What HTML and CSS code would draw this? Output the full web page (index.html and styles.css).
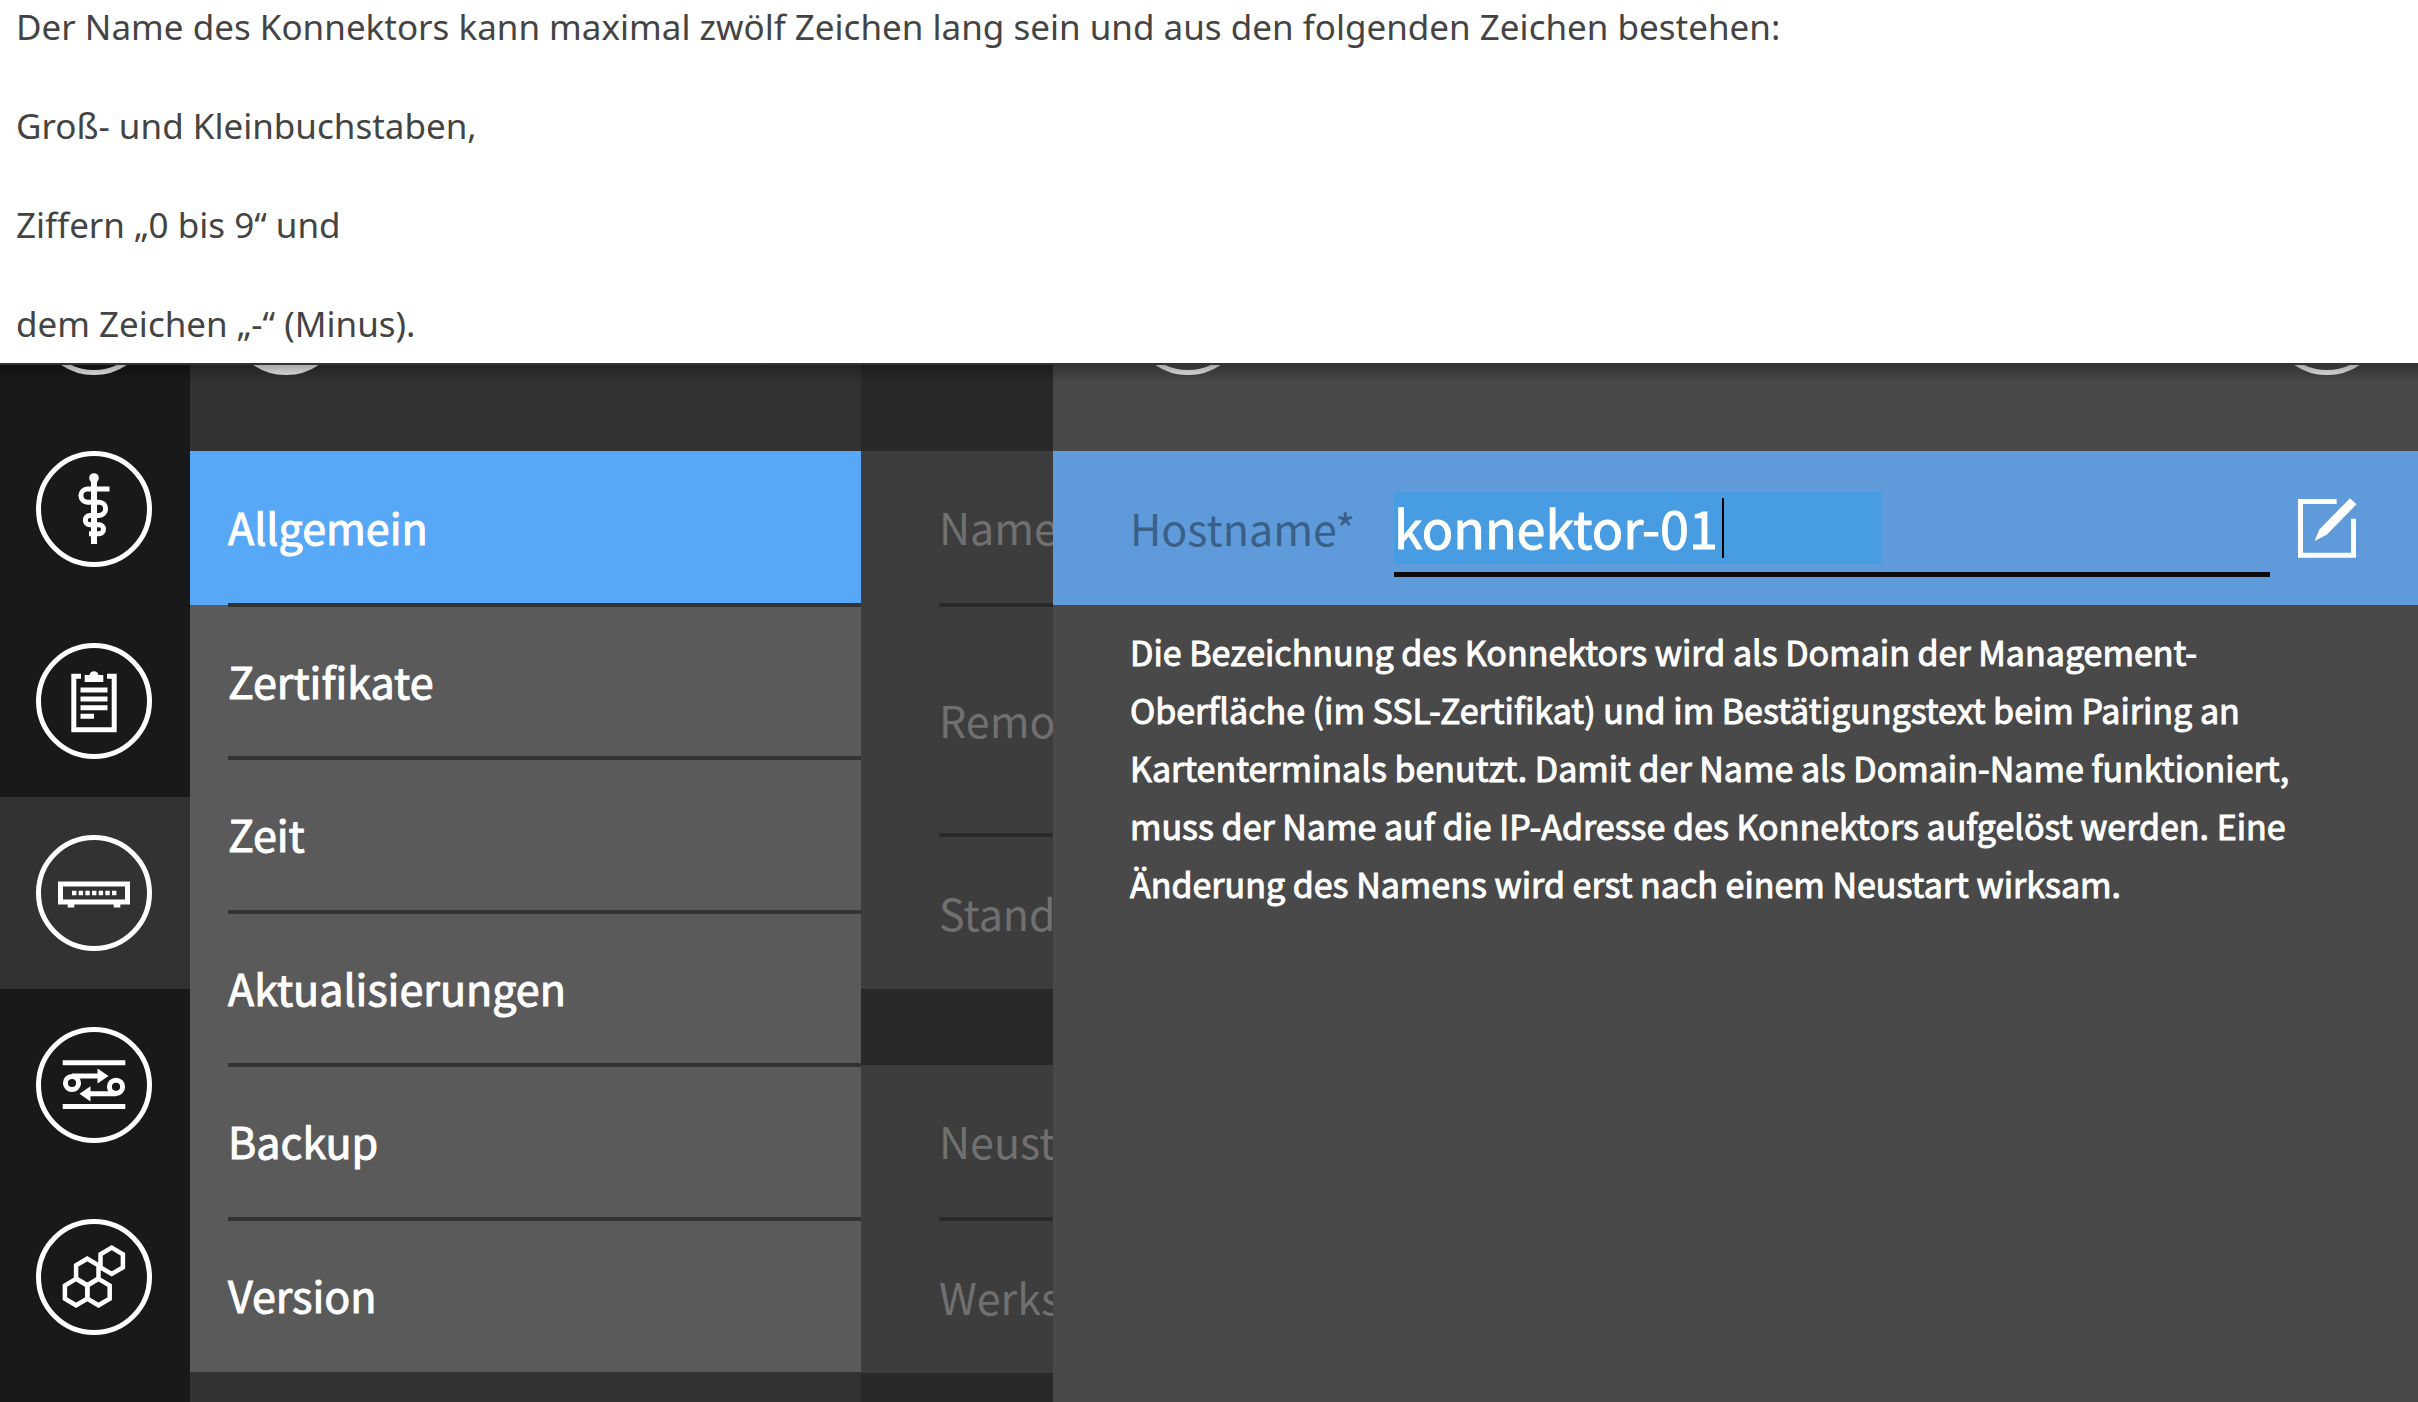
FILE: index.html
```html
<!DOCTYPE html>
<html lang="de">
<head>
<meta charset="utf-8">
<meta name="viewport" content="width=device-width, initial-scale=1">
<title>Konnektor – Allgemein</title>
<link rel="stylesheet" href="styles.css">
</head>
<body>
<section class="intro">
  <p>Der Name des Konnektors kann maximal zwölf Zeichen lang sein und aus den folgenden Zeichen bestehen:</p>
  <p>Groß- und Kleinbuchstaben,</p>
  <p>Ziffern „0 bis 9“ und</p>
  <p>dem Zeichen „-“ (Minus).</p>
</section>

<main class="app">
  <nav class="rail" aria-label="Bereiche">
    <div class="rail-item rail-item-cut"><span class="ring"></span></div>
    <button class="rail-item" type="button" aria-label="Praxis">
      <svg class="icon" viewBox="0 0 116 116" fill="none" stroke="#fff" stroke-width="5">
        <circle cx="58" cy="58" r="55.5"/>
        <circle cx="58" cy="27" r="4.8" fill="#fff" stroke="none"/>
        <path d="M58 27v66" stroke-width="6"/>
        <path d="M73.500 38H51.500a6.600 6.600 0 0 0 0 13.200H63a6.600 6.600 0 0 1 0 13.200H54a4.700 4.700 0 0 0 0 9.400h9a4.500 4.500 0 0 1 0 9H53"/>
      </svg>
    </button>
    <button class="rail-item" type="button" aria-label="Protokoll">
      <svg class="icon" viewBox="0 0 116 116" fill="none" stroke="#fff" stroke-width="5">
        <circle cx="58" cy="58" r="55.5"/>
        <path d="M45 33.200h-7.200v53.600h40.400V33.200H71"/>
        <path d="M48.700 39v-7h4.800a4.600 4.600 0 0 1 9 0h4.800v7z" fill="#fff" stroke="none"/>
        <path d="M44.500 47h27M44.500 56h27M44.500 64.700h27M44.500 73.300H58"/>
      </svg>
    </button>
    <button class="rail-item active" type="button" aria-label="System">
      <svg class="icon" viewBox="0 0 116 116" fill="none" stroke="#fff" stroke-width="5">
        <circle cx="58" cy="58" r="55.5"/>
        <path d="M24.500 49h67v18h-67z"/>
        <path d="M36 58h46" stroke-width="4.500" stroke-dasharray="4.400 2.270"/>
        <path d="M31.700 70.500h6.600M77.700 70.500h6.600" stroke-width="4"/>
      </svg>
    </button>
    <button class="rail-item" type="button" aria-label="Netzwerk">
      <svg class="icon" viewBox="0 0 116 116" fill="none" stroke="#fff" stroke-width="5">
        <circle cx="58" cy="58" r="55.5"/>
        <path d="M26.700 35.800h62.600M26.700 79.500h62.600"/>
        <circle cx="36" cy="56" r="6.600"/>
        <circle cx="80" cy="59.800" r="6.600"/>
        <path d="M36 49h29M80 66.800H52"/>
        <path d="M61.500 41.400 72.500 49l-11 7.600zM54.500 59.200 43.500 66.800l11 7.600z" fill="#fff" stroke="none"/>
      </svg>
    </button>
    <button class="rail-item" type="button" aria-label="Module">
      <svg class="icon" viewBox="0 0 116 116" fill="none" stroke="#fff" stroke-width="4.500">
        <circle cx="58" cy="58" r="55.5" stroke-width="5"/>
        <path d="M75.700 28.600l11.200 6.600v13.200l-11.200 6.600-11.200-6.600V35.200z"/>
        <path d="M51.300 39.700l11.200 6.600v13.200l-11.200 6.600-11.200-6.600V46.300z"/>
        <path d="M40.100 59.900l11.200 6.600v13.200l-11.200 6.600-11.200-6.600V66.500z"/>
        <path d="M62.500 59.900l11.200 6.600v13.200l-11.200 6.600-11.200-6.600V66.500z"/>
      </svg>
    </button>
  </nav>

  <nav class="menu" aria-label="System">
    <div class="head"><span class="ring ring-filled"></span></div>
    <div class="menu-list">
      <a class="menu-row active" href="#allgemein"><span>Allgemein</span></a>
      <a class="menu-row" href="#zertifikate"><span>Zertifikate</span></a>
      <a class="menu-row" href="#zeit"><span>Zeit</span></a>
      <a class="menu-row" href="#aktualisierungen"><span>Aktualisierungen</span></a>
      <a class="menu-row" href="#backup"><span>Backup</span></a>
      <a class="menu-row" href="#version"><span>Version</span></a>
    </div>
  </nav>

  <div class="content">
    <div class="head"></div>
    <div class="group">
      <div class="content-row">Name</div>
      <div class="content-row tall">Remo</div>
      <div class="content-row">Stand</div>
    </div>
    <div class="group">
      <div class="content-row">Neust</div>
      <div class="content-row">Werks</div>
    </div>
  </div>

  <section class="drawer">
    <div class="head"><span class="ring"></span><span class="ring"></span></div>
    <div class="form-row">
      <label for="hostname">Hostname*</label>
      <div class="field">
        <input id="hostname" type="text" value="konnektor-01" maxlength="12">
        <span class="caret"></span>
      </div>
      <button class="edit" type="button" aria-label="Bearbeiten">
        <svg viewBox="0 0 60 60" fill="#fff">
          <path d="M38.600 3.500H2.500v53.700h53V20.700" fill="none" stroke="#fff" stroke-width="5"/>
          <path d="M16.600 43l4.700-11.500L52 .3l6.500 6-29.800 30.500z"/>
        </svg>
      </button>
    </div>
    <p class="help">Die Bezeichnung des Konnektors wird als Domain der Management-Oberfläche (im SSL-Zertifikat) und im Bestätigungstext beim Pairing an Kartenterminals benutzt. Damit der Name als Domain-Name funktioniert, muss der Name auf die IP-Adresse des Konnektors aufgelöst werden. Eine Änderung des Namens wird erst nach einem Neustart wirksam.</p>
  </section>
</main>
</body>
</html>
```
FILE: styles.css
```css
* { box-sizing: border-box; }

body {
  margin: 0;
  min-height: 100vh;
  display: flex;
  flex-direction: column;
  background: #fff;
}

button {
  border: 0;
  padding: 0;
  background: none;
  cursor: pointer;
}

svg { display: block; }

/* Text above the screen */
.intro {
  display: grid;
  gap: 50px;
  padding: 2px 16px 15px;
  color: #444;
  font: 35px/49px "Noto Sans", sans-serif;
}
.intro p { margin: 0; }

/* Screen */
.app {
  position: relative;
  flex: 1;
  display: grid;
  grid-template-columns: 190px 671px 192px minmax(0, 1fr);
  border-top: 2px solid #333;
  color: #fff;
  font: 43px/60px "Noto Sans CJK SC", sans-serif;
}
.app::after {
  content: "";
  position: absolute;
  inset: 0 0 auto;
  height: 18px;
  background: linear-gradient(rgba(0, 0, 0, 0.3), rgba(0, 0, 0, 0));
  pointer-events: none;
}

.ring {
  flex: none;
  width: 116px;
  height: 116px;
  border: 5px solid #f2f2f2;
  border-radius: 50%;
}
.ring-filled { background: #f2f2f2; }

.head {
  display: flex;
  align-items: flex-end;
  height: 86px;
  padding-bottom: 76px;
  overflow: hidden;
}

/* Icon rail */
.rail { background: #191919; }
.rail-item {
  display: flex;
  align-items: center;
  justify-content: center;
  width: 100%;
  height: 192px;
  padding-right: 2px;
}
.rail-item-cut {
  align-items: flex-end;
  height: 48px;
  padding-bottom: 38px;
  overflow: hidden;
}
.rail-item.active { background: #323232; }
.icon { width: 116px; height: 116px; }

/* Menu */
.menu { background: #323232; }
.menu .head { padding-left: 38px; }
.menu-list {
  display: grid;
  grid-template-rows: repeat(6, 1fr);
  height: 921px;
  background: #5a5a5a;
}
.menu-row {
  display: flex;
  padding-left: 38px;
  color: #fff;
  text-decoration: none;
  -webkit-text-stroke: 1px currentColor;
}
.menu-row span {
  flex: 1;
  margin-bottom: -2px;
  padding-top: 45px;
  border-bottom: 4px solid #333;
}
.menu-row:last-child span { border-bottom: 0; }
.menu-row.active { background: #58a8f8; }

/* Content column, partly under the drawer */
.content {
  overflow: hidden;
  background: #292929;
  color: #707070;
}
.group {
  padding-left: 78px;
  background: #3d3d3d;
}
.group + .group { margin-top: 76px; }
.content-row {
  height: 156px;
  padding-top: 45px;
  border-bottom: 4px solid #292929;
  white-space: nowrap;
}
.content-row.tall {
  height: 230px;
  padding-top: 82px;
}
.content-row:last-child {
  height: 152px;
  padding-top: 45px;
  border-bottom: 0;
}

/* Drawer */
.drawer { background: #494949; }
.drawer .head {
  justify-content: space-between;
  padding-left: 77px;
  padding-right: 33px;
}
.form-row {
  display: flex;
  align-items: flex-start;
  height: 154px;
  padding: 41px 60px 0 77px;
  background: #5f9bdb;
}
.form-row label {
  width: 264px;
  color: #3b6088;
  line-height: 70px;
}
.field {
  position: relative;
  flex: 1;
  padding-bottom: 8px;
  border-bottom: 5px solid #0c0c0c;
}
.field input {
  display: block;
  width: 488px;
  height: 72px;
  padding: 0 0 3px;
  border: 0;
  outline: 0;
  background: #479ce2;
  color: #fff;
  font: 52px/69px "Noto Sans CJK SC", sans-serif;
  -webkit-text-stroke: 1px currentColor;
}
.caret {
  position: absolute;
  left: 328px;
  top: 6px;
  width: 2px;
  height: 60px;
  background: #000;
}
.edit {
  margin: 6px 0 0 28px;
}
.edit svg { width: 60px; height: 60px; }
.help {
  max-width: 1300px;
  margin: 0;
  padding: 18px 52px 0 77px;
  font-size: 34px;
  line-height: 58px;
  -webkit-text-stroke: 1px currentColor;
}
```
